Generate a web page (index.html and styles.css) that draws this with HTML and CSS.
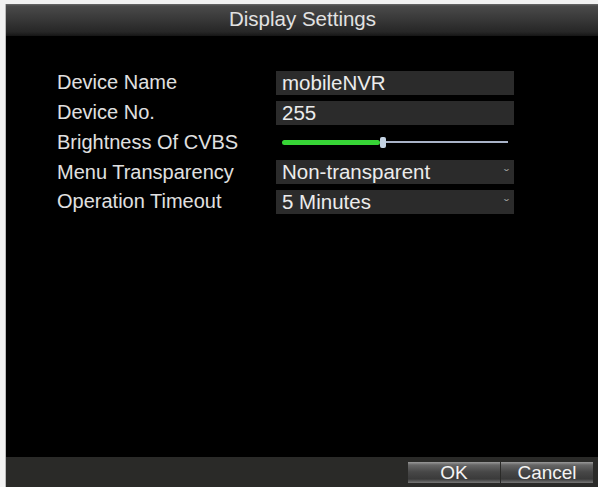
FILE: index.html
```
<!DOCTYPE html>
<html>
<head lang="en">
    <meta charset="UTF-8">
    <title>Display Settings</title>
    <link rel="stylesheet" href="styles.css">
</head>
<body>
    <div id="dialog">
        <div id="title">Display Settings</div>
        <div id="content">
            <ul id="form">
                <li>
                    <span class="label">Device Name</span>
                    <div class="field">mobileNVR</div>
                </li>
                <li>
                    <span class="label">Device No.</span>
                    <div class="field">255</div>
                </li>
                <li class="slider-row">
                    <span class="label">Brightness Of CVBS</span>
                    <div class="slider">
                        <div class="fill"></div>
                        <div class="thumb"></div>
                        <div class="track"></div>
                    </div>
                </li>
                <li>
                    <span class="label">Menu Transparency</span>
                    <div class="field combo">Non-transparent<span class="arrow">&#711;</span></div>
                </li>
                <li>
                    <span class="label">Operation Timeout</span>
                    <div class="field combo">5 Minutes<span class="arrow">&#711;</span></div>
                </li>
            </ul>
        </div>
        <div id="footer">
            <div class="btn">OK</div>
            <div class="btn">Cancel</div>
        </div>
    </div>
</body>
</html>
```
FILE: styles.css
```
*{
    margin: 0;
    padding: 0;
}
html,body{
    width: 598px;
    height: 487px;
    overflow: hidden;
    background: #f2f2f2;
}
body{
    padding: 4px 0 0 5px;
    box-sizing: border-box;
    font-family: "Liberation Sans", Arial, sans-serif;
    color: #e6e6e6;
}
li{
    list-style: none;
}
#dialog{
    width: 593px;
    height: 483px;
    display: flex;
    flex-direction: column;
    background: #000;
    border-left: 1px solid #bbb;
}
#title{
    height: 32px;
    line-height: 30px;
    text-align: center;
    font-size: 20.5px;
    color: #e2e2e2;
    background: linear-gradient(#6a6a6a 0, #4a4a4a 2px, #3a3a3a 14px, #262626 28px, #151515 32px);
}
#content{
    flex: 1;
    padding: 32px 0 0 51px;
}
#form li{
    display: flex;
    align-items: center;
    height: 29.75px;
}
.label{
    width: 219px;
    font-size: 20px;
    color: #e0e0e0;
}
.field{
    width: 232px;
    height: 24px;
    line-height: 24px;
    padding-left: 6px;
    font-size: 20.5px;
    background: #2b2b2b;
    color: #ececec;
    position: relative;
}
.arrow{
    position: absolute;
    right: 5px;
    top: 3px;
    font-size: 15px;
    color: #9a9a9a;
}
.slider{
    width: 238px;
    height: 10px;
    display: flex;
    align-items: center;
    padding: 0 6px;
    box-sizing: border-box;
}
.fill{
    width: 98px;
    height: 5px;
    border-radius: 3px;
    background: #37d436;
}
.thumb{
    width: 6px;
    height: 11px;
    border-radius: 2px;
    background: #c3d2e2;
}
.track{
    flex: 1;
    height: 2px;
    background: #a9b3c8;
}
#footer{
    height: 30px;
    background: #2a2a28;
    display: flex;
    align-items: center;
    justify-content: flex-end;
    padding-right: 6px;
}
.btn{
    width: 92px;
    height: 21px;
    line-height: 21px;
    margin-left: 1px;
    text-align: center;
    font-size: 19px;
    color: #f4f4f4;
    background: linear-gradient(#9a9a9a 0, #666 3px, #474747 10px, #3a3a3a 17px, #777 21px);
}
```
